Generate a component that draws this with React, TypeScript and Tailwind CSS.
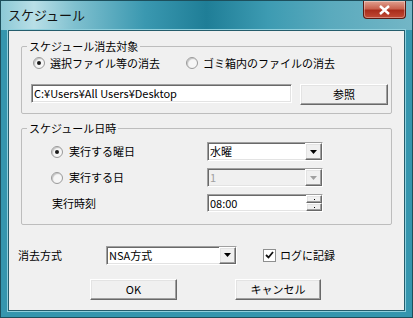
import React from "react";

const sunken =
  "border border-t-[#a0a0a0] border-l-[#a0a0a0] border-b-white border-r-white shadow-[inset_1px_1px_0_#696969,inset_-1px_-1px_0_#e3e3e3]";
const raised =
  "border border-t-white border-l-white border-b-[#696969] border-r-[#696969] shadow-[inset_-1px_-1px_0_#a0a0a0,inset_1px_1px_0_#e3e3e3] bg-[#f0f0f0]";

const Radio = ({ checked }: { checked?: boolean }) => (
  <div className="w-[12px] h-[12px] shrink-0 rounded-full border border-[#9a9a9a] bg-[#f6f6f6] flex items-center justify-center shadow-[inset_1px_1px_1px_#c2c2c2]">
    {checked && <div className="w-[4px] h-[4px] rounded-full bg-[#1a1a1a]" />}
  </div>
);

const DownArrow = ({ disabled }: { disabled?: boolean }) => (
  <svg width="7" height="4" viewBox="0 0 7 4">
    <path d="M0 0h7L3.5 4z" fill={disabled ? "#a0a0a0" : "#000"} />
  </svg>
);

const Combo = ({
  value,
  width,
  disabled,
}: {
  value: string;
  width: string;
  disabled?: boolean;
}) => (
  <div className={`${width} h-[19px] shrink-0 flex ${sunken} ${disabled ? "bg-[#f0f0f0]" : "bg-white"}`}>
    <div
      className={`flex-1 pl-[2px] leading-[17px] ${disabled ? "text-[#a0a0a0]" : "text-black"}`}
    >
      {value}
    </div>
    <div className={`w-[17px] h-[17px] flex items-center justify-center ${raised}`}>
      <DownArrow disabled={disabled} />
    </div>
  </div>
);

export default function App() {
  return (
    <div className="w-[413px] h-[318px] bg-[#3596ae] flex flex-col font-['Noto_Sans_CJK_JP',sans-serif] text-[11px] text-black border border-[#1d4f5c]">
      {/* title bar */}
      <div className="h-[29px] shrink-0 flex items-start justify-between bg-[linear-gradient(90deg,#8cc9d6_0%,#b9dfe7_8%,#7fc0cf_18%,#3a98b0_35%,#1f7e97_50%,#3d9bb2_65%,#5aaabd_80%,#73b6c6_100%)]">
        <div className="pl-[7px] pt-[4px] text-[13px] leading-[20px] text-[#111]">スケジュール</div>
        <div className="mr-[6px] w-[43px] h-[18px] rounded-b-[4px] border border-[#5a1a12] border-t-0 bg-[linear-gradient(180deg,#e0a190_0%,#c9634f_45%,#a92d1c_55%,#c24a35_100%)] flex items-center justify-center shadow-[inset_0_0_0_1px_rgba(255,255,255,0.35)]">
          <svg width="11" height="10" viewBox="0 0 11 10">
            <path d="M1 1l9 8M10 1l-9 8" stroke="#fff" strokeWidth="2.4" />
          </svg>
        </div>
      </div>
      {/* client area */}
      <div className="ml-[7px] mr-[7px] mb-[6px] flex-1 bg-[#f0f0f0] border border-[#255d6c] shadow-[0_0_0_1px_#8fcfdc] flex flex-col">
        <fieldset className="mt-[7px] mx-[12px] border border-[#bdbdbd] rounded-[2px] pb-[8px]">
          <legend className="ml-[5px] px-[2px] leading-[16px]">スケジュール消去対象</legend>
          <div className="mt-[1px] h-[16px] flex items-center">
            <div className="ml-[11px] w-[153px] flex items-center gap-[5px]">
              <Radio checked />
              <span>選択ファイル等の消去</span>
            </div>
            <div className="flex items-center gap-[5px]">
              <Radio />
              <span>ゴミ箱内のファイルの消去</span>
            </div>
          </div>
          <div className="mt-[13px] flex items-start">
            <div className={`ml-[9px] w-[261px] h-[19px] bg-white pl-[2px] leading-[17px] ${sunken}`}>
              C:¥Users¥All Users¥Desktop
            </div>
            <button className={`ml-[8px] w-[88px] h-[21px] leading-[19px] text-center ${raised}`}>
              参照
            </button>
          </div>
        </fieldset>

        <fieldset className="mt-[6px] mx-[12px] border border-[#bdbdbd] rounded-[2px] pb-[12px]">
          <legend className="ml-[5px] px-[2px] leading-[16px]">スケジュール日時</legend>
          <div className="mt-[6px] flex items-center h-[19px]">
            <div className="ml-[29px] w-[156px] flex items-center gap-[6px]">
              <Radio checked />
              <span>実行する曜日</span>
            </div>
            <Combo value="水曜" width="w-[116px]" />
          </div>
          <div className="mt-[7px] flex items-center h-[19px]">
            <div className="ml-[29px] w-[156px] flex items-center gap-[6px]">
              <Radio />
              <span>実行する日</span>
            </div>
            <Combo value="1" width="w-[116px]" disabled />
          </div>
          <div className="mt-[7px] flex items-center h-[18px]">
            <div className="ml-[30px] w-[155px]">実行時刻</div>
            <div className={`w-[116px] h-[18px] bg-white flex ${sunken}`}>
              <div className="flex-1 pl-[2px] leading-[16px]">08:00</div>
              <div className="w-[16px] flex flex-col">
                <div className={`h-[8px] ${raised} flex items-center justify-center`}>
                  <div className="w-[1px] h-[1px] bg-black" />
                </div>
                <div className={`h-[8px] ${raised} flex items-center justify-center`}>
                  <div className="w-[1px] h-[1px] bg-black" />
                </div>
              </div>
            </div>
          </div>
        </fieldset>

        <div className="mt-[20px] flex items-center h-[20px]">
          <div className="ml-[9px] w-[88px]">消去方式</div>
          <Combo value="NSA方式" width="w-[131px]" />
          <div className="ml-[26px] w-[13px] h-[13px] bg-white border border-[#8e8f8f] flex items-center justify-center">
            <svg width="9" height="8" viewBox="0 0 9 8">
              <path d="M1 4l2.5 2.5L8 1" stroke="#111" strokeWidth="1.8" fill="none" />
            </svg>
          </div>
          <span className="ml-[4px]">ログに記録</span>
        </div>

        <div className="mt-[14px] flex">
          <button className={`ml-[81px] w-[87px] h-[21px] leading-[19px] text-center ${raised}`}>OK</button>
          <button className={`ml-[58px] w-[86px] h-[21px] leading-[19px] text-center ${raised}`}>
            キャンセル
          </button>
        </div>
      </div>
    </div>
  );
}
